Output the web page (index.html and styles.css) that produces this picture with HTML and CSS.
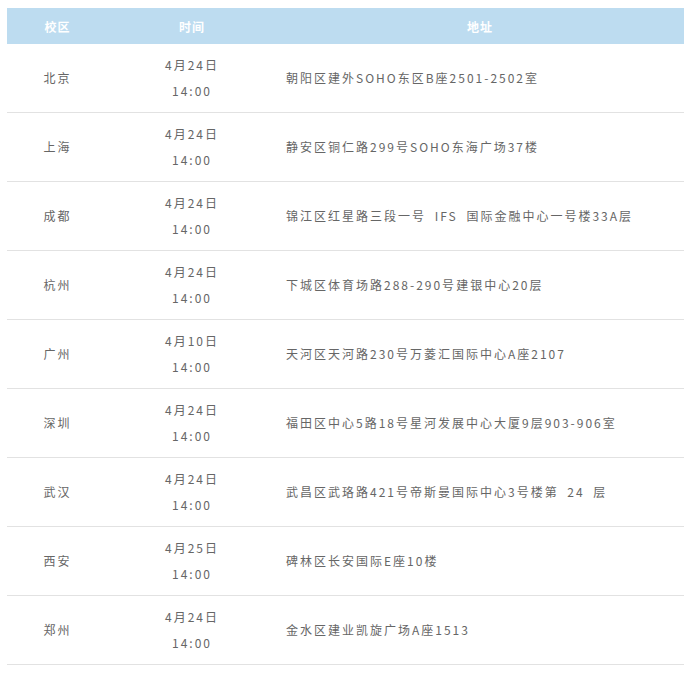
FILE: index.html
```html
<!DOCTYPE html>
<html lang="zh-CN">
<head>
<meta charset="utf-8">
<link rel="stylesheet" href="styles.css">
</head>
<body>
<table class="schools">
  <colgroup>
    <col class="c-campus"><col class="c-time"><col class="c-addr">
  </colgroup>
  <thead>
    <tr><th>校区</th><th>时间</th><th>地址</th></tr>
  </thead>
  <tbody>
    <tr><td class="campus">北京</td><td class="time">4月24日<br>14:00</td><td class="addr">朝阳区建外SOHO东区B座2501-2502室</td></tr>
    <tr><td class="campus">上海</td><td class="time">4月24日<br>14:00</td><td class="addr">静安区铜仁路299号SOHO东海广场37楼</td></tr>
    <tr><td class="campus">成都</td><td class="time">4月24日<br>14:00</td><td class="addr">锦江区红星路三段一号 IFS 国际金融中心一号楼33A层</td></tr>
    <tr><td class="campus">杭州</td><td class="time">4月24日<br>14:00</td><td class="addr">下城区体育场路288-290号建银中心20层</td></tr>
    <tr><td class="campus">广州</td><td class="time">4月10日<br>14:00</td><td class="addr">天河区天河路230号万菱汇国际中心A座2107</td></tr>
    <tr><td class="campus">深圳</td><td class="time">4月24日<br>14:00</td><td class="addr">福田区中心5路18号星河发展中心大厦9层903-906室</td></tr>
    <tr><td class="campus">武汉</td><td class="time">4月24日<br>14:00</td><td class="addr">武昌区武珞路421号帝斯曼国际中心3号楼第 24 层</td></tr>
    <tr><td class="campus">西安</td><td class="time">4月25日<br>14:00</td><td class="addr">碑林区长安国际E座10楼</td></tr>
    <tr><td class="campus">郑州</td><td class="time">4月24日<br>14:00</td><td class="addr">金水区建业凯旋广场A座1513</td></tr>
  </tbody>
</table>
</body>
</html>
```

FILE: styles.css
```css
html, body {
  background: #ffffff;
}
body {
  margin: 8px 0 0 7px;
  font-family: "Noto Sans CJK SC", sans-serif;
  font-size: 12px;
  color: #666666;
}
.schools {
  width: 677px;
  border-collapse: collapse;
  table-layout: fixed;
}
.c-campus { width: 101px; }
.c-time { width: 168px; }
.c-addr { width: 408px; }
.schools th {
  height: 36px;
  padding: 0;
  background: #bddcf0;
  color: #ffffff;
  font-weight: bold;
  text-align: center;
  letter-spacing: 1px;
}
.schools td {
  padding: 8px 0;
  line-height: 26px;
  border-bottom: 1px solid #e2e2e2;
  letter-spacing: 2px;
  vertical-align: middle;
  white-space: nowrap;
}
.schools .campus,
.schools .time {
  text-align: center;
}
.schools .addr {
  text-align: left;
  padding-left: 10px;
  word-spacing: 4px;
}
```
